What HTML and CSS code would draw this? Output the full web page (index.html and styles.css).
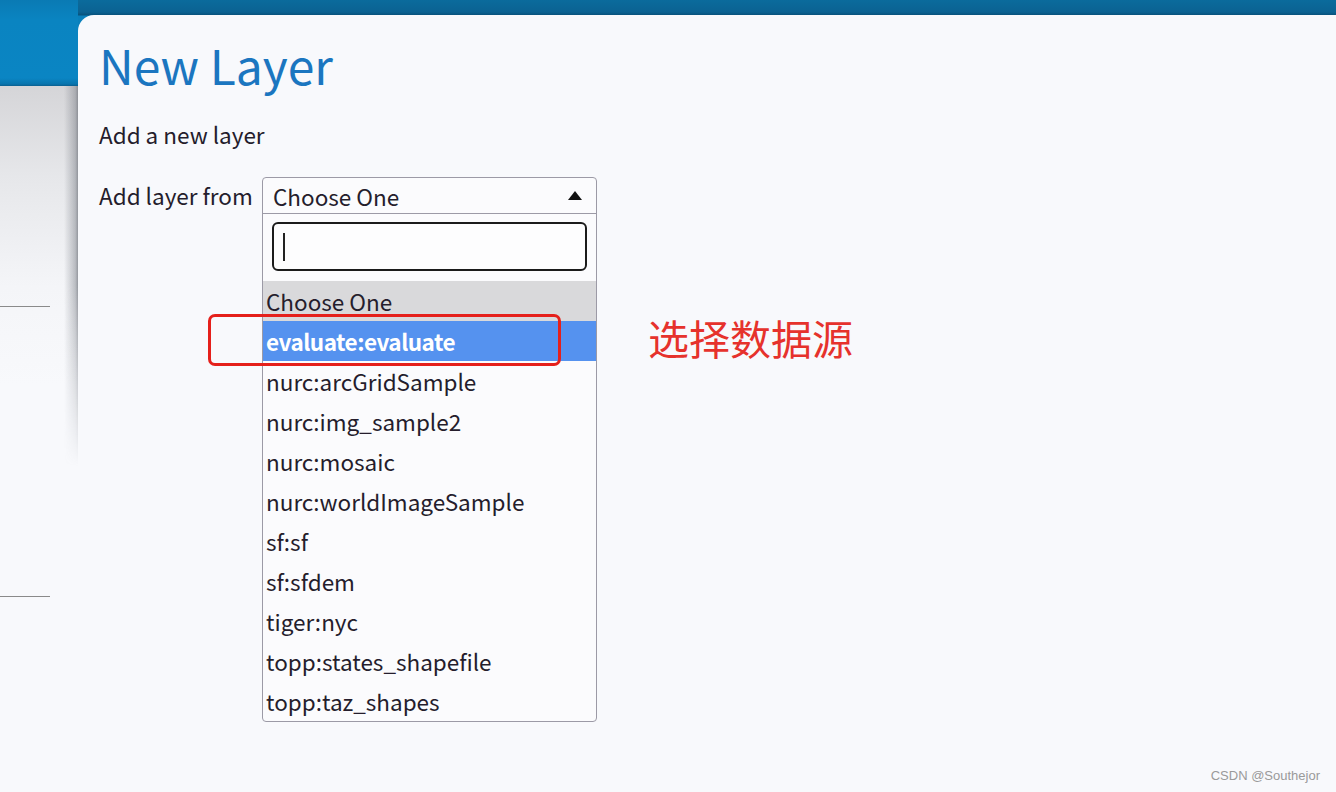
FILE: index.html
```html
<!DOCTYPE html>
<html lang="en">
<head>
<meta charset="utf-8">
<title>New Layer</title>
<link rel="stylesheet" href="styles.css">
</head>
<body>
<div class="page">
  <aside class="sidebar">
    <div class="side-head"></div>
    <div class="side-body">
      <div class="side-rule rule-a"></div>
      <div class="side-rule rule-b"></div>
    </div>
  </aside>
  <div class="main">
    <section class="panel">
      <h1 class="title">New Layer</h1>
      <p class="lead">Add a new layer</p>
      <div class="form-row">
        <label class="field-label">Add layer from</label>
        <div class="select-wrap">
          <div class="dropdown">
            <div class="dd-head">
              <span class="dd-value">Choose One</span>
              <span class="dd-arrow"></span>
            </div>
            <div class="dd-search">
              <div class="search-box"><span class="caret"></span></div>
            </div>
            <ul class="dd-list">
              <li class="opt opt-default">Choose One</li>
              <li class="opt opt-active">evaluate:evaluate</li>
              <li class="opt">nurc:arcGridSample</li>
              <li class="opt">nurc:img_sample2</li>
              <li class="opt">nurc:mosaic</li>
              <li class="opt">nurc:worldImageSample</li>
              <li class="opt">sf:sf</li>
              <li class="opt">sf:sfdem</li>
              <li class="opt">tiger:nyc</li>
              <li class="opt">topp:states_shapefile</li>
              <li class="opt">topp:taz_shapes</li>
            </ul>
          </div>
          <div class="callout-box"></div>
          <div class="callout-note">选择数据源</div>
        </div>
      </div>
    </section>
  </div>
</div>
<div class="watermark">CSDN @Southejor</div>
</body>
</html>
```

FILE: styles.css
```css
* { box-sizing: border-box; }
html, body { margin: 0; padding: 0; }
body {
  width: 1336px;
  height: 792px;
  overflow: hidden;
  position: relative;
  font-family: "Noto Sans CJK KR", "Noto Sans", sans-serif;
  background: #f8f9fc;
}
.page {
  display: flex;
  height: 792px;
}
.sidebar {
  width: 78px;
  flex: none;
  display: flex;
  flex-direction: column;
  position: relative;
}
.side-head {
  height: 86px;
  background: linear-gradient(to bottom, #0a7ab4 0, #0a84c1 20px, #0a85c3 78px, #0874ad 84px, #0a5f8f 86px);
}
.side-body {
  flex: 1;
  background: linear-gradient(to bottom, #d5d5d8 0, #e6e7ea 90px, #f4f5f8 200px, #f8f9fc 300px);
  display: flex;
  flex-direction: column;
}
.side-rule {
  width: 50px;
  height: 1px;
  background: #8a8a8a;
}
.rule-a { margin-top: 220px; }
.rule-b { margin-top: 289px; }
.sidebar::after {
  content: "";
  position: absolute;
  right: 0;
  top: 86px;
  width: 14px;
  height: 380px;
  background: linear-gradient(to right, rgba(120,124,132,0) 0, rgba(120,124,132,.45) 80%, rgba(110,114,122,.7) 100%);
  -webkit-mask-image: linear-gradient(to bottom, #000 0, #000 200px, transparent 100%);
  mask-image: linear-gradient(to bottom, #000 0, #000 200px, transparent 100%);
}
.main {
  flex: 1;
  display: flex;
  flex-direction: column;
  padding-top: 15px;
  background: linear-gradient(to bottom, #0b6b9c 0, #0b6292 12px, #08527c 15px, #0a80bc 16px, #0a80bc 100%);
}
.panel {
  flex: 1;
  background: #f8f9fc;
  border-top-left-radius: 16px;
  padding: 19px 0 0 21px;
  color: #251d2c;
}
.title {
  margin: 0;
  font-weight: 400;
  font-size: 48px;
  line-height: 60px;
  color: #1b76c0;
}
.lead {
  margin: 25px 0 0 0;
  font-size: 22.5px;
  line-height: 30px;
}
.form-row {
  display: flex;
  margin-top: 28px;
}
.field-label {
  width: 163px;
  flex: none;
  font-size: 22.5px;
  line-height: 36px;
  white-space: nowrap;
}
.select-wrap {
  position: relative;
}
.dropdown {
  width: 335px;
  border: 1px solid #9c9aa6;
  border-radius: 4px;
  background: #fbfbfd;
  overflow: hidden;
}
.dd-head {
  height: 36px;
  display: flex;
  align-items: center;
  justify-content: space-between;
  padding: 0 14px 0 10px;
  border-bottom: 1px solid #9c9aa6;
  font-size: 22.5px;
}
.dd-arrow {
  width: 0;
  height: 0;
  border-left: 7px solid transparent;
  border-right: 7px solid transparent;
  border-bottom: 9px solid #111;
}
.dd-search {
  padding: 8px 9px 10px 9px;
}
.search-box {
  height: 49px;
  border: 2px solid #1b1b1b;
  border-radius: 6px;
  background: #fdfdfe;
  display: flex;
  align-items: center;
  padding-left: 9px;
}
.caret {
  width: 2px;
  height: 28px;
  background: #222;
}
.dd-list {
  list-style: none;
  margin: 0;
  padding: 0;
}
.opt {
  height: 40px;
  line-height: 40px;
  padding-left: 3px;
  font-size: 22.5px;
  white-space: nowrap;
}
.opt-default { background: #d9d9db; }
.opt-active {
  background: #5592ef;
  color: #fff;
  font-weight: 700;
  letter-spacing: -0.5px;
}
.callout-box {
  position: absolute;
  left: -54px;
  top: 137px;
  width: 353px;
  height: 52px;
  border: 3px solid #e5201b;
  border-radius: 7px;
}
.callout-note {
  position: absolute;
  left: 386px;
  top: 134px;
  font-family: "Noto Sans CJK SC", sans-serif;
  font-size: 41px;
  line-height: 52px;
  color: #e6322c;
  white-space: nowrap;
}
.watermark {
  position: absolute;
  right: 16px;
  bottom: 9px;
  font-family: "Liberation Sans", Arial, sans-serif;
  font-size: 13px;
  color: #9a9a9a;
}
```
